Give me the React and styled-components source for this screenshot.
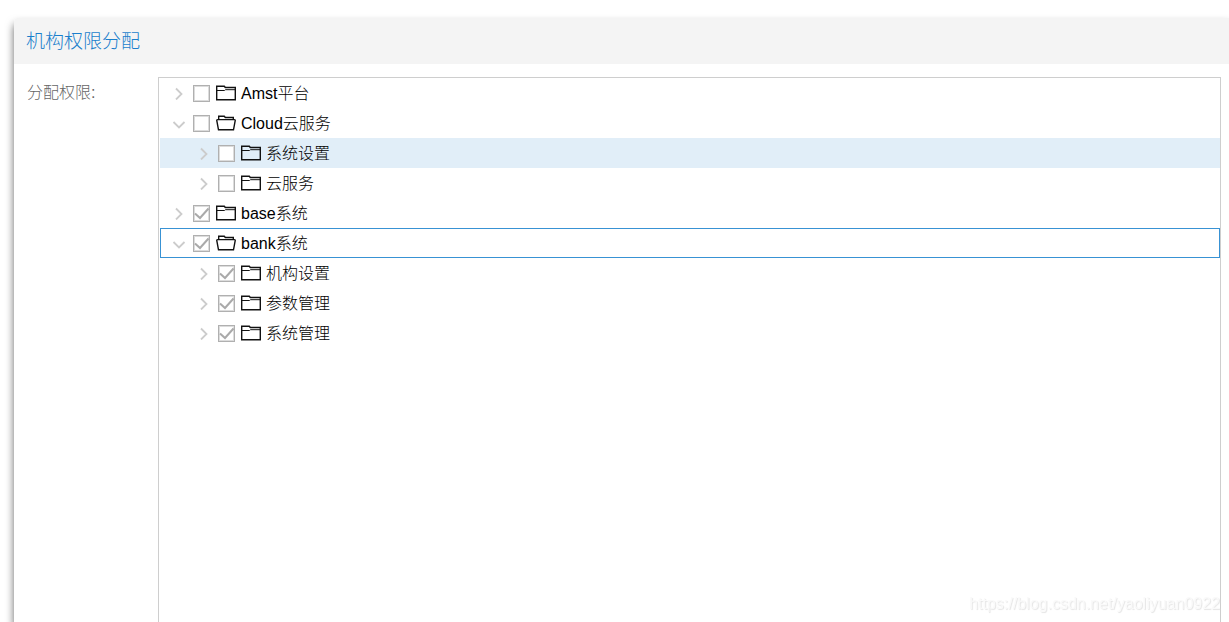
import React, { useState } from 'react';
import styled, { createGlobalStyle } from 'styled-components';

const GlobalStyle = createGlobalStyle`
  * {
    box-sizing: border-box;
  }

  body {
    margin: 0;
    background: #fff;
    color: #000;
    font-family: "Liberation Sans", "Noto Sans CJK SC", sans-serif;
    font-size: 16px;
    font-weight: 300;
  }
`;

const Page = styled.div`
  display: flex;
  height: 100vh;
  padding: 18px 0 0 14px;
  overflow: hidden;
`;

const Panel = styled.section`
  flex: 1;
  display: flex;
  flex-direction: column;
  background: #fff;
  border-radius: 4px 0 0 0;
  box-shadow: 0 6px 8px rgba(0, 0, 0, 0.6);
`;

const PanelHeader = styled.header`
  padding: 2px 12px 0;
  background: #f4f4f4;
  border-radius: 4px 0 0 0;
`;

const Title = styled.h1`
  margin: 0;
  color: #1b7fcc;
  font-size: 19px;
  font-weight: 300;
  line-height: 44px;
`;

const PanelBody = styled.div`
  flex: 1;
  display: flex;
  padding: 13px 8px 0 13px;
`;

const FieldLabel = styled.span`
  width: 131px;
  color: #666;
  line-height: 32px;
`;

const Tree = styled.ul`
  flex: 1;
  margin: 0;
  padding: 0 0 0 1px;
  list-style: none;
  border: 1px solid #cecece;
  border-bottom: none;
`;

const Row = styled.li`
  display: flex;
  align-items: center;
  height: 30px;
  padding-left: ${props => 12 + props.$level * 25}px;
  background: ${props => props.$hovered ? '#e1eef8' : 'transparent'};
  outline: ${props => props.$focused ? '1px solid #3892d4' : 'none'};
  outline-offset: -1px;
`;

const Expander = styled.button`
  display: flex;
  width: 14px;
  height: 14px;
  margin-right: 7px;
  padding: 0;
  border: none;
  background: none;
  cursor: pointer;
`;

const NodeLabel = styled.label`
  display: flex;
  align-items: center;
`;

const NodeText = styled.span`
  padding-top: 2px;
  line-height: 28px;
`;

const CheckWrap = styled.span`
  position: relative;
  display: flex;
  margin-right: 6px;
`;

const Checkbox = styled.input`
  appearance: none;
  width: 17px;
  height: 17px;
  margin: 0;
  background: #fff;
  border: 1px solid #b0b0b0;
  box-shadow: inset 0 0 0 1px #dcdcdc;
`;

const CheckMark = styled.svg`
  position: absolute;
  inset: 0;
  pointer-events: none;
`;

const FolderSvg = styled.svg`
  margin-right: 5px;
`;

const Watermark = styled.div`
  position: fixed;
  right: 9px;
  bottom: 9px;
  color: #fafafa;
  line-height: 18px;
  text-shadow: 1px 1px 1px #e4e4e4;
`;

const nodes = [
  { id: 'amst', text: 'Amst平台', level: 0 },
  { id: 'cloud', text: 'Cloud云服务', level: 0, open: true },
  { id: 'cloud-settings', text: '系统设置', level: 1, hovered: true },
  { id: 'cloud-service', text: '云服务', level: 1 },
  { id: 'base', text: 'base系统', level: 0, checked: true },
  { id: 'bank', text: 'bank系统', level: 0, open: true, checked: true, focused: true },
  { id: 'bank-org', text: '机构设置', level: 1, checked: true },
  { id: 'bank-params', text: '参数管理', level: 1, checked: true },
  { id: 'bank-system', text: '系统管理', level: 1, checked: true },
];

function Chevron({ open }) {
  return (
    <svg width="14" height="14" viewBox="0 0 14 14" fill="none" stroke="#ccc" strokeWidth="1.8">
      <path d={open ? 'M1.5 6l5.5 5.5L12.5 6' : 'M4 2.5L9.5 8 4 13.5'} />
    </svg>
  );
}

function Folder({ open }) {
  return (
    <FolderSvg width="20" height="18" viewBox="0 0 20 18" fill="none" stroke="#111" strokeWidth="1.4">
      {open ? (
        <>
          <path d="M2.7 5.4V2.3H8.3L9.3 3.5H17.3V5.4" />
          <path d="M1.6 5.6H18.4Q19.4 5.6 19.2 6.6L17.5 15.8H2.5L0.8 6.6Q0.6 5.6 1.6 5.6Z" />
        </>
      ) : (
        <>
          <path d="M0.7 15.8V2.2H8.3L9.3 3.5H19.3V15.8Z" />
          <path d="M0.7 6.5H8.5L9.5 5.7H19.3" strokeWidth="1" />
        </>
      )}
    </FolderSvg>
  );
}

function TreeNode({ node }) {
  const [checked, setChecked] = useState(Boolean(node.checked));

  return (
    <Row $level={node.level} $hovered={node.hovered} $focused={node.focused}>
      <Expander type="button" aria-label={node.text} aria-expanded={Boolean(node.open)}>
        <Chevron open={node.open} />
      </Expander>
      <NodeLabel>
        <CheckWrap>
          <Checkbox
            type="checkbox"
            checked={checked}
            onChange={e => setChecked(e.target.checked)}
          />
          {checked && (
            <CheckMark width="17" height="17" viewBox="0 0 17 17" fill="none" stroke="#aaa" strokeWidth="2">
              <path d="M2 8.5l5 4.5L15.5 3.5" />
            </CheckMark>
          )}
        </CheckWrap>
        <Folder open={node.open} />
        <NodeText>{node.text}</NodeText>
      </NodeLabel>
    </Row>
  );
}

function App() {
  return (
    <>
      <GlobalStyle />
      <Page>
        <Panel>
          <PanelHeader>
            <Title>机构权限分配</Title>
          </PanelHeader>
          <PanelBody>
            <FieldLabel id="tree-label">分配权限:</FieldLabel>
            <Tree aria-labelledby="tree-label">
              {nodes.map(node => (
                <TreeNode key={node.id} node={node} />
              ))}
            </Tree>
          </PanelBody>
        </Panel>
      </Page>
      <Watermark>https://blog.csdn.net/yaoliyuan0922</Watermark>
    </>
  );
}

export default App;
